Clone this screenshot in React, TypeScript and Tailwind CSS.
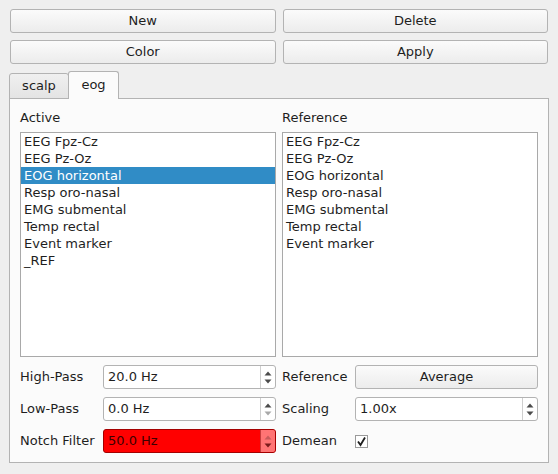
import React from "react";

const CHANNELS = [
  "EEG Fpz-Cz",
  "EEG Pz-Oz",
  "EOG horizontal",
  "Resp oro-nasal",
  "EMG submental",
  "Temp rectal",
  "Event marker",
];

function PushButton({ label }: { label: string }) {
  return (
    <button
      type="button"
      className="h-[24px] w-full rounded-[3px] border border-[#b3b3b3] bg-gradient-to-b from-[#fbfbfb] to-[#ececec] text-[13px] text-[#1e1e1e]"
    >
      {label}
    </button>
  );
}

function Arrow({ up, color }: { up: boolean; color: string }) {
  return (
    <svg width="8" height="5" viewBox="0 0 8 5">
      {up ? <polygon points="0.5,4.5 4,0.5 7.5,4.5" fill={color} /> : <polygon points="0.5,0.5 7.5,0.5 4,4.5" fill={color} />}
    </svg>
  );
}

function SpinBox({
  value,
  upColor = "#4b4b4b",
  downColor = "#4b4b4b",
  red = false,
}: {
  value: string;
  upColor?: string;
  downColor?: string;
  red?: boolean;
}) {
  return (
    <div
      className={
        red
          ? "flex h-[24px] w-full rounded-[3px] border border-[#a40000] bg-[#ff0000]"
          : "flex h-[24px] w-full rounded-[3px] border border-[#b3b3b3] bg-white"
      }
    >
      <div className={red ? "flex flex-1 items-center pl-[4px] text-[13px] text-[#3c0000]" : "flex flex-1 items-center pl-[4px] text-[13px] text-[#1e1e1e]"}>
        {value}
      </div>
      <div
        className={
          red
            ? "flex w-[15px] flex-col items-center justify-center gap-[3px] rounded-r-[2px] border-l border-[#c43c3c] bg-[#ff7474]"
            : "flex w-[15px] flex-col items-center justify-center gap-[3px] border-l border-[#cfcfcf]"
        }
      >
        <Arrow up color={upColor} />
        <Arrow up={false} color={downColor} />
      </div>
    </div>
  );
}

function ListBox({ items, selected }: { items: string[]; selected?: number }) {
  return (
    <div className="h-[225px] border border-[#a9a9a9] bg-white">
      {items.map((it, i) => (
        <div
          key={it}
          className={
            i === selected
              ? "h-[17px] bg-[#308cc6] pl-[3px] text-[13px] leading-[17px] text-white"
              : "h-[17px] pl-[3px] text-[13px] leading-[17px] text-[#1e1e1e]"
          }
        >
          {it}
        </div>
      ))}
    </div>
  );
}

export default function App() {
  return (
    <div
      className="h-[474px] w-[558px] bg-[#efefef] pt-[9px] text-[#1e1e1e]"
      style={{ fontFamily: '"DejaVu Sans", sans-serif' }}
    >
      <div className="grid grid-cols-2 gap-x-[7px] gap-y-[7px] px-[10px]">
        <PushButton label="New" />
        <PushButton label="Delete" />
        <PushButton label="Color" />
        <PushButton label="Apply" />
      </div>

      <div className="mt-[7px] px-[9px]">
        <div className="flex h-[27px] items-end">
          <div className="-mb-px flex h-[26px] w-[60px] items-center justify-center rounded-t-[3px] border border-[#b3b3b3] bg-gradient-to-b from-[#f0f0f0] to-[#e4e4e4] text-[13px]">
            scalp
          </div>
          <div className="relative z-10 -mb-px -ml-px flex h-[28px] w-[51px] items-center justify-center rounded-t-[3px] border border-b-0 border-[#b3b3b3] bg-[#fbfbfb] pb-[2px] text-[13px]">
            eog
          </div>
        </div>
        <div className="flex h-[365px] flex-col border border-[#b3b3b3] bg-[#fbfbfb] px-[10px] pt-[10px]">
          <div className="grid grid-cols-2 gap-x-[6px]">
            <div className="flex flex-col gap-[6px]">
              <div className="h-[17px] text-[13px] leading-[17px]">Active</div>
              <ListBox items={[...CHANNELS, "_REF"]} selected={2} />
            </div>
            <div className="flex flex-col gap-[6px]">
              <div className="h-[17px] text-[13px] leading-[17px]">Reference</div>
              <ListBox items={CHANNELS} />
            </div>
          </div>

          <div className="mt-[8px] grid grid-cols-2 gap-x-[6px]">
            <div className="grid grid-cols-[83px_1fr] items-center gap-y-[8px] text-[13px]">
              <span>High-Pass</span>
              <SpinBox value="20.0 Hz" />
              <span>Low-Pass</span>
              <SpinBox value="0.0 Hz" downColor="#a8a8a8" />
              <span>Notch Filter</span>
              <SpinBox value="50.0 Hz" red upColor="#c85a5a" downColor="#7a1a1a" />
            </div>
            <div className="grid grid-cols-[73px_1fr] items-center gap-y-[8px] text-[13px]">
              <span>Reference</span>
              <PushButton label="Average" />
              <span>Scaling</span>
              <SpinBox value="1.00x" />
              <span>Demean</span>
              <div className="flex h-[24px] items-center">
                <div className="flex h-[13px] w-[13px] items-center justify-center border border-[#9a9a9a] bg-white">
                  <svg width="11" height="11" viewBox="0 0 11 11">
                    <polyline points="2,5.5 4.5,9 9,1.5" fill="none" stroke="#1e1e1e" strokeWidth="1.8" />
                  </svg>
                </div>
              </div>
            </div>
          </div>
        </div>
      </div>
    </div>
  );
}
